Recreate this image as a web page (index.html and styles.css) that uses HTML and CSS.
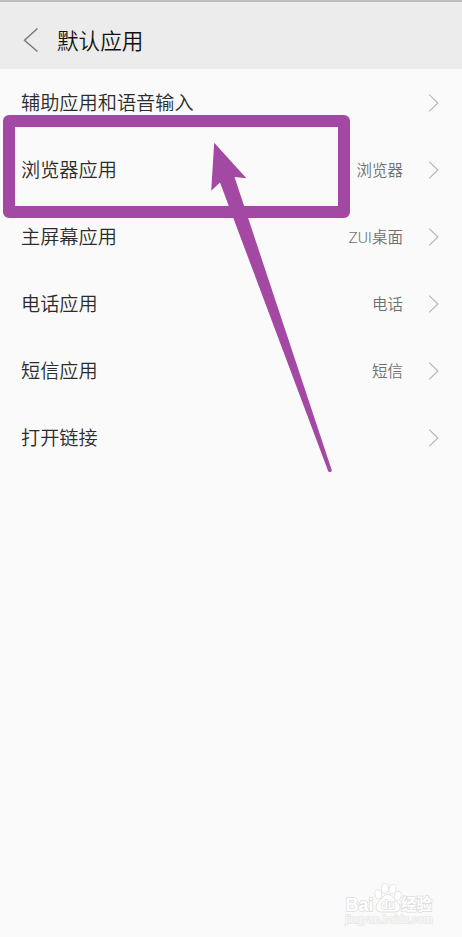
FILE: index.html
```html
<!DOCTYPE html>
<html lang="zh-CN">
<head>
<meta charset="utf-8">
<title>默认应用</title>
<link rel="stylesheet" href="styles.css">
</head>
<body>
<main class="screen">
  <header class="header">
    <svg class="back" viewBox="0 0 16 24"><path d="M14.5 .5 1.5 12.2l13 11.3"/></svg>
    <h1 class="title">默认应用</h1>
  </header>
  <ul class="list">
    <li class="row"><span class="label">辅助应用和语音输入</span><span class="value"></span><svg class="chevron" viewBox="0 0 11 18"><path d="M1.2.7 9.9 9 1.2 17.3"/></svg></li>
    <li class="row"><span class="label">浏览器应用</span><span class="value">浏览器</span><svg class="chevron" viewBox="0 0 11 18"><path d="M1.2.7 9.9 9 1.2 17.3"/></svg></li>
    <li class="row"><span class="label">主屏幕应用</span><span class="value">ZUI桌面</span><svg class="chevron" viewBox="0 0 11 18"><path d="M1.2.7 9.9 9 1.2 17.3"/></svg></li>
    <li class="row"><span class="label">电话应用</span><span class="value">电话</span><svg class="chevron" viewBox="0 0 11 18"><path d="M1.2.7 9.9 9 1.2 17.3"/></svg></li>
    <li class="row"><span class="label">短信应用</span><span class="value">短信</span><svg class="chevron" viewBox="0 0 11 18"><path d="M1.2.7 9.9 9 1.2 17.3"/></svg></li>
    <li class="row"><span class="label">打开链接</span><span class="value"></span><svg class="chevron" viewBox="0 0 11 18"><path d="M1.2.7 9.9 9 1.2 17.3"/></svg></li>
  </ul>
  <div class="frame"></div>
  <svg class="arrow" viewBox="0 0 124 332"><path d="M4.2 2.8 36.4 38.3 24.5 37 121.800 330.300Q121.500 333 118.300 331.500L10 42.500 1.200 50.800Z"/></svg>
  <svg class="watermark" viewBox="0 0 100 50">
    <g class="mark">
      <text class="brand" x="1.500" y="29.500" textLength="28" lengthAdjust="spacingAndGlyphs">Bai</text>
      <ellipse cx="34.300" cy="13.200" rx="3" ry="4.200" transform="rotate(-12 34.300 13.200)"/>
      <ellipse cx="41" cy="7.300" rx="3.100" ry="4.600"/>
      <ellipse cx="48.500" cy="8" rx="3.100" ry="4.600" transform="rotate(12 48.500 8)"/>
      <ellipse cx="53.800" cy="15" rx="3" ry="4.200" transform="rotate(18 53.800 15)"/>
      <path d="M43.800 13.800c-3 0-4.500 2.700-6.500 5-3 3-5 4.200-5 7.200 0 3 2.200 4.600 5 4.600h13.500c3 0 5-1.600 5-4.600 0-3.200-2.800-4.200-5.300-7.200-2-2.500-3.700-5-6.700-5z"/>
      <text class="du" x="37" y="28" textLength="14" lengthAdjust="spacingAndGlyphs">du</text>
      <text class="topic" x="57" y="29" textLength="31" lengthAdjust="spacingAndGlyphs">经验</text>
      <text class="domain" x="1.500" y="41.500" textLength="87" lengthAdjust="spacingAndGlyphs">jingyan.baidu.com</text>
    </g>
  </svg>
</main>
</body>
</html>
```
FILE: styles.css
```css
* { box-sizing: border-box; }

body {
  margin: 0;
  background: #fafafa;
  font-family: Roboto, "Noto Sans CJK SC", sans-serif;
}

.screen {
  position: relative;
  height: 937px;
  overflow: hidden;
}

.header {
  display: flex;
  align-items: center;
  height: 69px;
  padding: 8px 23px 0;
  background: #ececec;
  border-top: 2px solid #bebebe;
}

.back {
  width: 16px;
  height: 24px;
  fill: none;
  stroke: #777;
  stroke-width: 1.4;
}

.title {
  margin: 0 0 0 18px;
  padding-top: 4px;
  font-size: 21.6px;
  font-weight: 350;
  line-height: 30px;
  color: #111;
}

.list {
  margin: 0;
  padding: 0;
  list-style: none;
}

.row {
  display: flex;
  align-items: center;
  height: 67px;
  padding: 0 23px 0 21px;
}

.label {
  flex: 1;
  padding-top: 3px;
  font-size: 19.2px;
  font-weight: 350;
  line-height: 28px;
  color: #2c2c2c;
}

.value {
  margin-right: 25px;
  padding-top: 2px;
  font-size: 15.5px;
  font-weight: 350;
  line-height: 24px;
  color: #707070;
}

.chevron {
  width: 11px;
  height: 18px;
  fill: none;
  stroke: #b5b5b5;
  stroke-width: 1.1;
}

.frame {
  position: absolute;
  left: 3px;
  top: 115px;
  width: 347px;
  height: 103px;
  border: 12px solid #a349a4;
  border-radius: 6px;
}

.arrow {
  position: absolute;
  left: 210px;
  top: 140px;
  width: 124px;
  height: 332px;
  fill: #a349a4;
}

.watermark {
  position: absolute;
  left: 344px;
  top: 881px;
  width: 100px;
  height: 50px;
}

.mark {
  fill: #fff;
  stroke: #dedede;
  stroke-width: 1.6;
  paint-order: stroke;
  font-family: "Liberation Sans", "Noto Sans CJK SC", sans-serif;
  font-weight: 700;
}

.brand { font-size: 19px; }
.du { font-size: 12px; }
.topic { font-size: 15.5px; }
.domain { font-size: 10px; font-weight: 400; stroke: #e8e8e8; fill: #fafafa; }
```
